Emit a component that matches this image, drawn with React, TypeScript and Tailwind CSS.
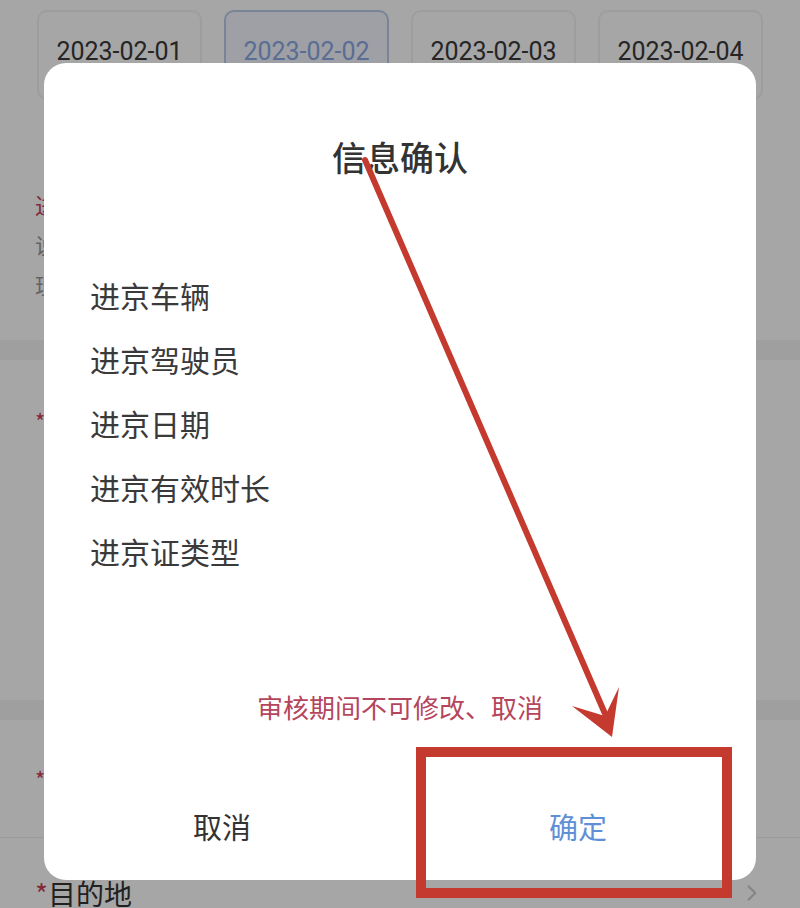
import { ChevronRight } from 'lucide-react'

const dates = ['2023-02-01', '2023-02-02', '2023-02-03', '2023-02-04']
const items = ['进京车辆', '进京驾驶员', '进京日期', '进京有效时长', '进京证类型']

function App() {
    return (
        <div className="relative h-[908px] w-[800px] overflow-hidden bg-[#f4f4f4] font-['Noto_Sans_CJK_SC',sans-serif]">
            {/* page under the dialog */}
            <div className="flex gap-[22px] px-[37px] pt-[10px] pb-[20px] bg-white">
                {dates.map((d, i) => (
                    <div
                        key={d}
                        className={
                            i === 1
                                ? 'flex w-[166px] h-[90px] justify-center pt-[22px] rounded-[10px] border-2 border-[#bccbea] bg-[#f3f6fd] text-[#8aa8e4]'
                                : 'flex w-[166px] h-[90px] justify-center pt-[22px] rounded-[10px] border-2 border-[#f2f2f2] bg-white text-[#3a3a3a]'
                        }
                    >
                        <span className="font-['Roboto',sans-serif] text-[25px] leading-[36px]">{d}</span>
                    </div>
                ))}
            </div>
            <div className="flex flex-col px-[35px] pt-[64px] pb-[36px] bg-white text-[22px] leading-[40px]">
                <span className="text-[#c9405a]">进京</span>
                <span className="text-[#999]">说明</span>
                <span className="text-[#999]">理由</span>
            </div>
            <div className="h-[20px]" />
            <div className="bg-white h-[340px] px-[35px] pt-[44px]">
                <span className="text-[#c9405a] text-[22px]">*</span>
            </div>
            <div className="h-[20px]" />
            <div className="bg-white">
                <div className="flex items-center justify-between h-[118px] px-[35px] border-b border-[#eee]">
                    <span className="text-[#c9405a] text-[22px]">*</span>
                    <ChevronRight className="w-[26px] h-[26px] text-[#ccc]" />
                </div>
                <div className="flex items-center justify-between h-[110px] px-[35px] text-[28px] leading-[40px] text-[#333]">
                    <span>
                        <span className="text-[#c9405a]">*</span>目的地
                    </span>
                    <ChevronRight className="w-[26px] h-[26px] text-[#ccc]" />
                </div>
            </div>

            {/* mask */}
            <div className="absolute inset-0 bg-black/35" />

            {/* dialog */}
            <div className="absolute left-[44px] top-[63px] w-[712px] h-[817px] rounded-[22px] bg-white flex flex-col">
                <div className="pt-[70px] text-center text-[34px] leading-[48px] font-medium text-[#333]">信息确认</div>
                <div className="mt-[82px] flex flex-col px-[46px]">
                    {items.map((t) => (
                        <span key={t} className="text-[30px] leading-[64px] text-[#3a3a3a]">
                            {t}
                        </span>
                    ))}
                </div>
                <div className="flex-1" />
                <div className="text-center text-[26px] leading-[40px] text-[#b5455c]">审核期间不可修改、取消</div>
                <div className="mt-[47px] flex h-[106px]">
                    <button className="flex-1 text-[29px] text-[#333]">取消</button>
                    <button className="flex-1 text-[29px] text-[#5f8fd6]">确定</button>
                </div>
            </div>

            {/* red annotation */}
            <svg className="absolute inset-0" width="800" height="908" viewBox="0 0 800 908">
                <line x1="365" y1="160" x2="606" y2="716" stroke="#c53a2f" strokeWidth="6" strokeLinecap="round" />
                <polygon points="572,706 612,737 619,687 605,716" fill="#c53a2f" />
                <rect x="421" y="752" width="306" height="141" fill="none" stroke="#c53a2f" strokeWidth="10" />
            </svg>
        </div>
    )
}

export default App
